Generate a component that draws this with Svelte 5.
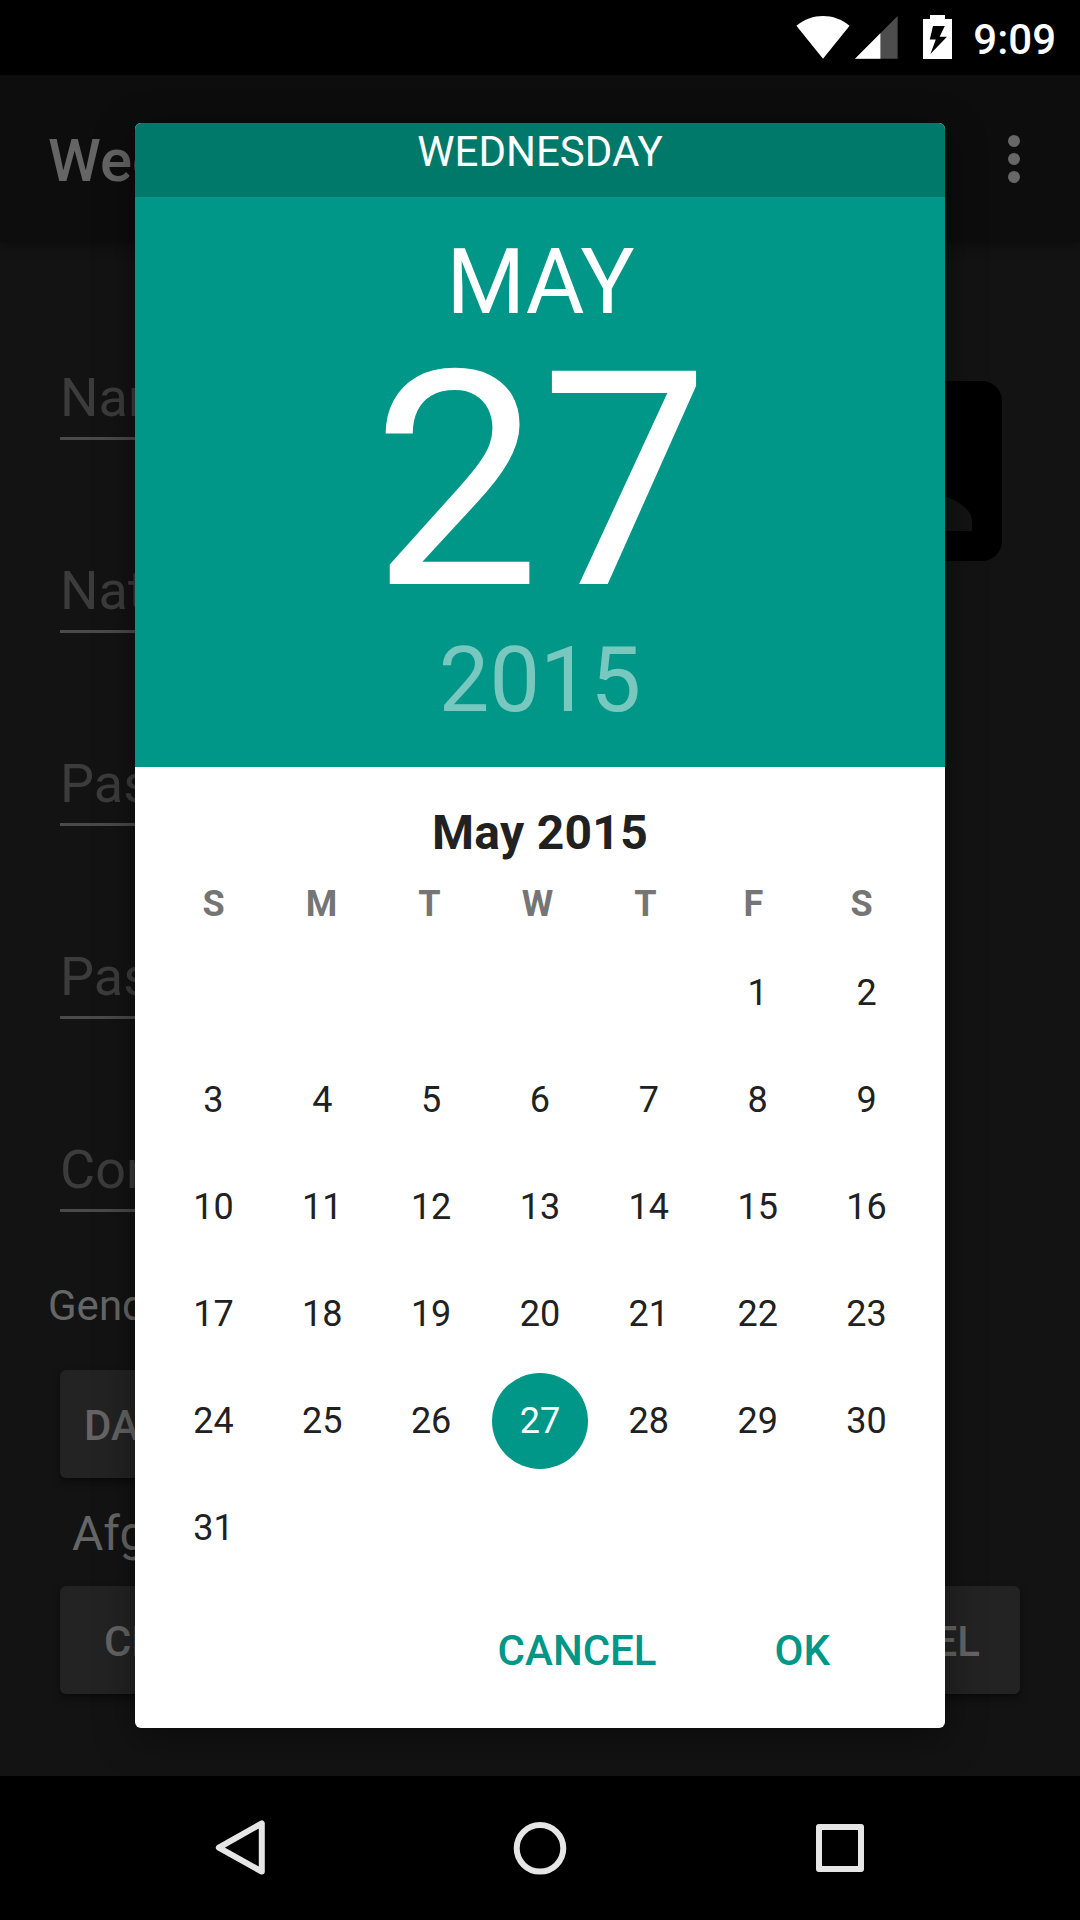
<script>
  const fields = ['Name', 'Nat.', 'Pass', 'Pass', 'Conf'];
  const weekdays = ['S', 'M', 'T', 'W', 'T', 'F', 'S'];
  const firstColumn = 5;
  const selected = 27;
  const cells = Array.from({ length: 42 }, (_, i) => {
    const day = i - firstColumn + 1;
    return day >= 1 && day <= 31 ? day : null;
  });
</script>

<div class="screen">
  <header class="status">
    <svg class="wifi" width="54" height="43" viewBox="0 0 54 43"><path d="M.4 9.8C16-3.2 38-3.2 53.6 9.8L27 42.8z" fill="#fff" /></svg>
    <svg class="signal" width="43" height="43" viewBox="0 0 43 43"><path d="M42.6 0v42.7H0z" fill="#4d4d4d" /><path d="M25.4 17.3v25.4H0z" fill="#fff" /></svg>
    <svg class="battery" width="30" height="44" viewBox="0 0 30 44"><path fill-rule="evenodd" d="M8 0h15v4h7v40H1V4h7zM11 11L7.8 24.6h6L8.4 39 25 21.8h-7.4L22.8 11z" fill="#fff" /></svg>
    <span class="clock">9:09</span>
  </header>

  <main class="app">
    <div class="appbar">
      <h1>Wed</h1>
      <div class="dots"><i></i><i></i><i></i></div>
    </div>
    <div class="form">
      <div class="top">
        <div class="fields">
          {#each fields as label}
            <div class="field">{label}</div>
          {/each}
        </div>
        <svg class="avatar" width="180" height="180" viewBox="3 3 18 18"><path fill="#000" d="M3 5v14c0 1.1.89 2 2 2h14c1.1 0 2-.9 2-2V5c0-1.1-.9-2-2-2H5c-1.11 0-2 .9-2 2zm12 4c0 1.66-1.34 3-3 3s-3-1.34-3-3 1.34-3 3-3 3 1.34 3 3zm-9 8c0-2 4-3.1 6-3.1s6 1.1 6 3.1v1H6v-1z" /></svg>
      </div>
      <div class="gender">Gender</div>
      <button class="raised date">DATE</button>
      <div class="country">Afgh</div>
      <div class="actions">
        <button class="raised create">CREATE</button>
        <button class="raised cancel-form">CANCEL</button>
      </div>
    </div>
  </main>

  <nav>
    <svg width="60" height="60" viewBox="0 0 60 60"><path d="M51.8 5.4v48.2L8.8 29.6z" /></svg>
    <svg width="60" height="60" viewBox="0 0 60 60"><circle cx="30" cy="30.3" r="23.3" /></svg>
    <svg width="60" height="60" viewBox="0 0 60 60"><rect x="9" y="9" width="42" height="42" /></svg>
  </nav>

  <section class="dialog">
    <div class="weekday">WEDNESDAY</div>
    <div class="hero">
      <div class="month">MAY</div>
      <div class="day">27</div>
      <div class="year">2015</div>
    </div>
    <div class="title">May 2015</div>
    <div class="labels">
      {#each weekdays as name}<span>{name}</span>{/each}
    </div>
    <div class="days">
      {#each cells as day}
        <span class:selected={day === selected}>{#if day}<b>{day}</b>{/if}</span>
      {/each}
    </div>
    <div class="buttons">
      <button>CANCEL</button>
      <button>OK</button>
    </div>
  </section>
</div>

<style>
  :global(body) { background: #000; }
  .screen {
    position: relative;
    display: flex;
    flex-direction: column;
    width: 1080px;
    height: 1920px;
    overflow: hidden;
    background: #000;
    font-family: Roboto, sans-serif;
  }
  button {
    margin: 0;
    padding: 0;
    border: 0;
    background: none;
    font: 500 42px/48px Roboto, sans-serif;
    white-space: nowrap;
  }
  svg { display: block; flex: none; }

  .status {
    display: flex;
    justify-content: flex-end;
    align-items: flex-start;
    height: 75px;
    padding-right: 24px;
    box-sizing: border-box;
  }
  .wifi { margin: 16px 5px 0 0; }
  .signal { margin: 16px 24px 0 0; }
  .battery { margin: 15px 21px 0 0; }
  .clock {
    padding-top: 16px;
    color: #fff;
    font-size: 42px;
    font-weight: 500;
    line-height: 48px;
  }

  .app { display: flex; flex-direction: column; height: 1701px; background: #131313; }
  .appbar {
    display: flex;
    justify-content: space-between;
    align-items: center;
    height: 168px;
    padding: 0 60px 0 48px;
    background: #0d0d0d;
    box-shadow: 0 4px 12px rgba(0, 0, 0, .3);
  }
  h1 { margin: 4px 0 0; color: #656565; font-size: 60px; font-weight: 500; line-height: 70px; }
  .dots { display: flex; flex-direction: column; gap: 6px; }
  .dots i { width: 12px; height: 12px; border-radius: 50%; background: #676767; }

  .form { display: flex; flex-direction: column; padding: 0 60px; }
  .top { display: flex; justify-content: space-between; align-items: flex-start; height: 1029px; }
  .fields { display: flex; flex-direction: column; width: 600px; padding-top: 4px; }
  .field {
    height: 193px;
    box-sizing: border-box;
    padding: 120px 0 0;
    color: #3c3c3c;
    border-bottom: 3px solid #4a4a4a;
    font-size: 54px;
    line-height: 62px;
  }
  .avatar { margin: 138px 18px 0 0; }
  .gender { margin: 9px 0 0 -12px; color: #666; font-size: 42px; line-height: 50px; }
  .raised {
    height: 108px;
    border-radius: 6px;
    background: #232323;
    color: #656565;
    box-shadow: 0 4px 7px rgba(0, 0, 0, .45);
  }
  .date { width: 300px; margin-top: 39px; padding: 3px 0 0 24px; text-align: left; }
  .country { margin: 28px 0 0 12px; color: #666; font-size: 48px; line-height: 56px; }
  .actions { display: flex; justify-content: space-between; margin-top: 24px; }
  .create { width: 470px; padding: 3px 0 0 44px; text-align: left; }
  .cancel-form { width: 470px; padding: 3px 40px 0 0; text-align: right; }

  nav {
    display: flex;
    justify-content: center;
    align-items: center;
    gap: 240px;
    height: 144px;
  }
  nav svg { fill: none; stroke: #e6e6e6; stroke-width: 6; stroke-linejoin: round; }

  .dialog {
    position: absolute;
    top: 123px;
    left: 135px;
    width: 810px;
    height: 1605px;
    overflow: hidden;
    border-radius: 6px;
    background: #fff;
    box-shadow: 0 10px 40px rgba(0, 0, 0, .42);
    text-align: center;
  }
  .weekday { height: 74px; background: #00796b; color: #fff; font-size: 42px; line-height: 57px; }
  .hero { display: flex; flex-direction: column; height: 570px; background: #009688; color: #fff; }
  .month { padding: 33px 0 0 1px; font-size: 90px; line-height: 106px; }
  .day { margin-top: 25px; padding-left: 1px; font-size: 300px; line-height: 241px; }
  .year { margin-top: 26px; color: #79c8c0; font-size: 90px; line-height: 106px; }
  .title { padding-top: 38px; color: #212121; font-size: 48px; font-weight: 700; line-height: 56px; letter-spacing: .3px; }
  .labels {
    display: grid;
    grid-template-columns: repeat(7, 108px);
    margin: 22px 0 0 24.5px;
    color: #757575;
    font-size: 36px;
    font-weight: 700;
    line-height: 42px;
  }
  .days {
    display: grid;
    grid-template-columns: repeat(7, 1fr);
    grid-auto-rows: 107px;
    margin-top: 14px;
    padding: 0 24px;
  }
  .days span { display: flex; justify-content: center; align-items: center; }
  .days b { width: 96px; color: #212121; font-size: 36px; font-weight: 400; line-height: 96px; border-radius: 50%; }
  .days .selected b { background: #009688; color: #fff; }
  .buttons { display: flex; justify-content: flex-end; gap: 118px; padding: 46px 115px 0 0; }
  .buttons button { color: #009688; }
</style>
